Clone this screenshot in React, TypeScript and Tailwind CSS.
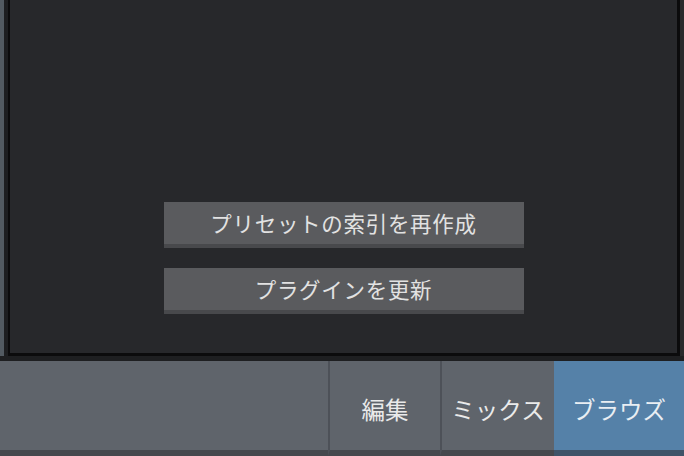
import React from "react";

const FONT = { fontFamily: '"Noto Sans CJK JP", "Noto Sans", sans-serif' };

function ActionButton({ label }: { label: string }) {
  return (
    <button className="w-[360px] h-[46px] bg-[#5a5b5e] border-b-4 border-[#48494c] flex items-center justify-center text-[21.5px] tracking-[0.7px] text-[#e2e2e2] leading-none">
      {label}
    </button>
  );
}

function Tab({
  label,
  width,
  active = false,
  divider = true,
}: {
  label: string;
  width: string;
  active?: boolean;
  divider?: boolean;
}) {
  return (
    <div
      className={`${width} h-full flex items-center justify-center text-[23.5px] leading-none border-b-[6px] ${
        active
          ? "bg-[#5581a8] border-b-[#3e5368] text-[#e9eef3]"
          : "bg-[#5f646b] border-b-[#45484d] text-[#eaeaea]"
      } ${divider ? "border-l-2 border-l-[#4d5158]" : ""}`}
    >
      <span className="pt-[8px]">{label}</span>
    </div>
  );
}

export default function App() {
  return (
    <div
      className="w-[684px] h-[456px] flex flex-col bg-[#1e1f21] overflow-hidden"
      style={FONT}
    >
      {/* Browser panel */}
      <div className="h-[356px] flex">
        <div className="w-[4px] bg-[#525a61]" />
        <div className="w-[4px] bg-[#1d1e20]" />
        <div className="flex-1 bg-[#27282b] border-l-2 border-r-[3px] border-b-[3px] border-[#0b0b0c] flex flex-col items-center justify-end gap-[20px] pb-[39px]">
          <ActionButton label="プリセットの索引を再作成" />
          <ActionButton label="プラグインを更新" />
        </div>
        <div className="w-[4px] bg-[#29292b]" />
      </div>
      <div className="h-[5px] bg-[#1e1f21]" />

      {/* Bottom tab bar */}
      <div className="flex-1 flex">
        <div className="flex-1 bg-[#5f646b] border-b-[6px] border-[#45484d]" />
        <Tab label="編集" width="w-[112px]" />
        <Tab label="ミックス" width="w-[114px]" />
        <Tab label="ブラウズ" width="w-[130px]" active divider={false} />
      </div>
    </div>
  );
}
